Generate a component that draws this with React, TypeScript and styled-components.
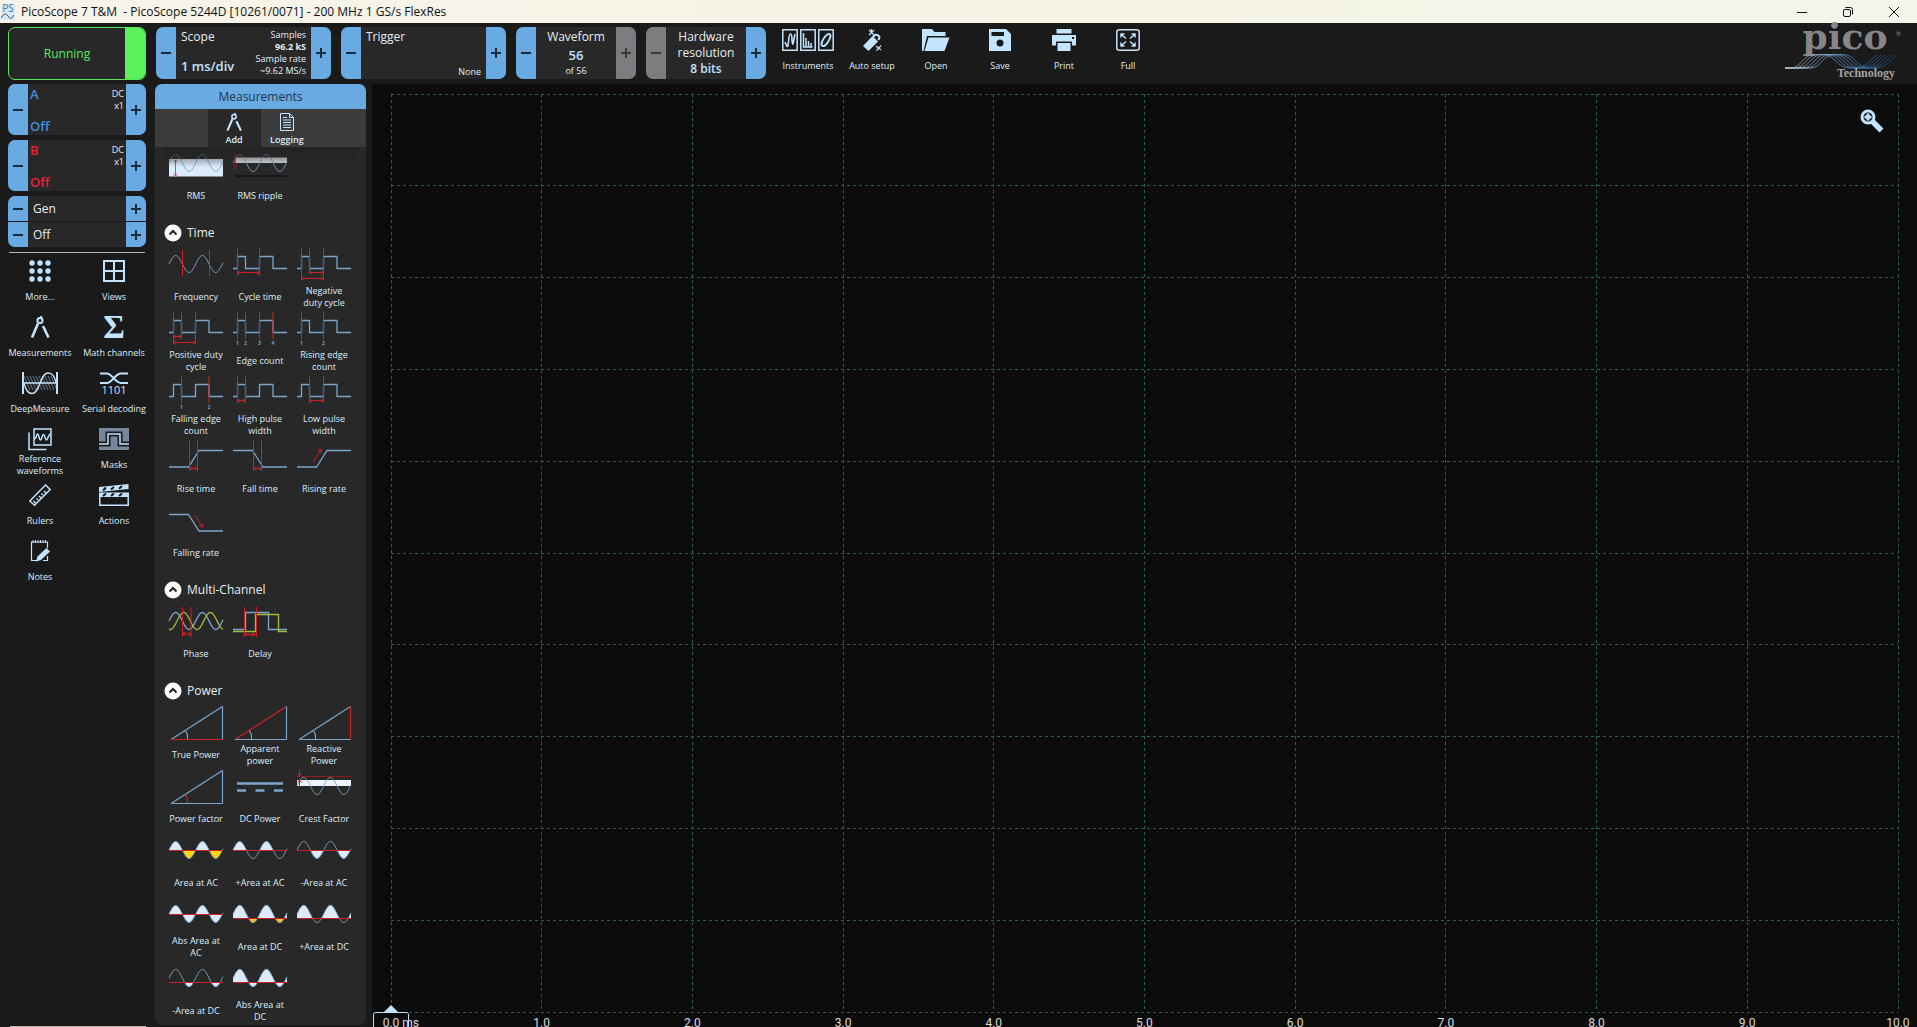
import React from "react";
import styled, { createGlobalStyle, css } from "styled-components";

const c = {
  ink: "#c3e4ff",
  label: "#dceefc",
  text: "#e6eef5",
  blue: "#69aae2",
  grey: "#7c7d80",
  panel: "#282828",
  shell: "#1a1a1a",
  line: "#79a6cc",
  red: "#cf2026",
  fill: "#dcebfb",
  yellow: "#fbd40f",
  amber: "#fbbe1c",
  green: "#9bbf3c",
};

const GlobalStyle = createGlobalStyle`
  * { box-sizing: border-box; }
  html, body, #root { height: 100%; }
  body {
    margin: 0;
    overflow: hidden;
    background: ${c.shell};
    color: ${c.text};
    font-family: "Open Sans", "Noto Sans", sans-serif;
    font-size: 12px;
    line-height: 16px;
  }
  button { font: inherit; color: inherit; background: none; border: 0; padding: 0; }
  h1, h2 { font: inherit; margin: 0; }
  svg { display: block; overflow: visible; flex: none; }
`;

const Window = styled.div`
  display: flex;
  flex-direction: column;
  height: 100vh;
`;

const TitleBar = styled.header`
  display: flex;
  align-items: center;
  height: 23px;
  flex: none;
  gap: 6px;
  background: linear-gradient(90deg, #f7f3ea, #f4f3e4 60%, #f3f4ec);
  color: #111;
`;

const Title = styled.h1`
  flex: 1;
  white-space: pre;
`;

const WindowButton = styled.button`
  display: grid;
  place-items: center;
  width: 46px;
  height: 23px;
  margin-left: -6px;
`;

const Toolbar = styled.div`
  display: flex;
  flex: none;
  gap: 10px;
  height: 61px;
  padding: 4px 12px 4px 8px;
`;

const RunButton = styled.button`
  display: flex;
  width: 138px;
  height: 53px;
  border: 1px solid #56e85a;
  border-radius: 7px;
  overflow: hidden;
  background: ${c.panel};
  color: #5bea5e;
  align-items: center;
  text-align: center;
  &::after {
    content: "";
    width: 20px;
    align-self: stretch;
    background: #5cf05c;
  }
`;

const RunText = styled.span`
  flex: 1;
`;

const Stepper = styled.section<{ $width?: number; $height?: number }>`
  display: flex;
  flex: none;
  width: ${(p) => (p.$width ? `${p.$width}px` : "auto")};
  height: ${(p) => p.$height ?? 52}px;
  border-radius: 7px;
  overflow: hidden;
  background: ${c.panel};
`;

const StepButton = styled.button<{ $off?: boolean }>`
  display: grid;
  place-items: center;
  flex: none;
  width: 20px;
  background: ${(p) => (p.$off ? c.grey : c.blue)};
  color: ${(p) => (p.$off ? "#3a3a3c" : "#1c2b38")};
`;

const Body = styled.div<{ $pad?: number }>`
  display: flex;
  flex: 1;
  justify-content: space-between;
  padding: 0 ${(p) => p.$pad ?? 5}px;
`;

const Column = styled.div<{ $align?: string; $grow?: boolean; $bottom?: number }>`
  display: flex;
  flex-direction: column;
  justify-content: space-between;
  align-items: ${(p) => p.$align ?? "flex-start"};
  flex: ${(p) => (p.$grow ? 1 : "none")};
  padding: 2px 0 ${(p) => p.$bottom ?? 2}px;
`;

const Strong = styled.strong<{ $color?: string; $size?: number }>`
  font-size: ${(p) => p.$size ?? 13}px;
  font-weight: 600;
  color: ${(p) => p.$color ?? c.ink};
`;

const Small = styled.span<{ $bold?: boolean }>`
  font-size: 9px;
  line-height: 12px;
  font-weight: ${(p) => (p.$bold ? 700 : 400)};
`;

const Tool = styled.button`
  display: flex;
  flex-direction: column;
  align-items: center;
  gap: 3px;
  height: 56px;
`;

const ToolLabel = styled.span`
  display: flex;
  align-items: center;
  justify-content: center;
  height: 24px;
  font-size: 9px;
  line-height: 12px;
  color: ${c.label};
`;

const ToolRow = styled.nav`
  display: grid;
  grid-template-columns: repeat(6, 64px);
  padding-top: 2px;
`;

const Logo = styled.svg`
  margin-left: auto;
`;

const Main = styled.main`
  display: flex;
  flex: 1;
  min-height: 0;
`;

const Sidebar = styled.aside`
  display: flex;
  flex-direction: column;
  flex: none;
  width: 155px;
`;

const Channels = styled.div`
  display: flex;
  flex-direction: column;
  gap: 5px;
  padding: 0 9px 0 8px;
`;

const Generator = styled.div`
  display: flex;
  flex-direction: column;
  gap: 1px;
  border-radius: 7px;
  overflow: hidden;
`;

const GeneratorRow = styled.div`
  display: flex;
  height: 25px;
  background: ${c.panel};
`;

const GeneratorText = styled.span`
  flex: 1;
  padding: 5px;
`;

const Rule = styled.hr`
  width: 136px;
  height: 1px;
  margin: 0;
  border: 0;
  align-self: center;
  background: #bcb8ae;
`;

const SideTools = styled.nav`
  display: grid;
  grid-template-columns: 74px 74px;
  padding: 7px 3px 0;
`;

const SideFooter = styled(Rule)`
  margin-top: auto;
`;

const Panel = styled.section`
  display: flex;
  flex-direction: column;
  flex: none;
  width: 211px;
  margin-bottom: 2px;
  border-radius: 7px;
  overflow: hidden;
  background: ${c.panel};
`;

const PanelTitle = styled.h2`
  flex: none;
  height: 25px;
  line-height: 25px;
  text-align: center;
  background: ${c.blue};
  color: #1d3550;
`;

const Tabs = styled.div`
  display: grid;
  grid-template-columns: repeat(4, 1fr);
  flex: none;
  height: 38px;
  background: #3b3b3b;
`;

const Tab = styled.button<{ $active?: boolean; $column: number }>`
  grid-column: ${(p) => p.$column};
  display: flex;
  flex-direction: column;
  align-items: center;
  justify-content: space-between;
  padding: 4px 0 1px;
  font-size: 9px;
  line-height: 12px;
  font-weight: 600;
  color: ${c.label};
  ${(p) => p.$active && css`background: ${c.panel};`}
`;

const Scroller = styled.div`
  position: relative;
  flex: 1;
  min-height: 0;
  overflow: hidden;
  padding: 0 9px;
  &::before {
    content: "";
    position: absolute;
    z-index: 1;
    inset: 0 8px auto;
    height: 20px;
    background: linear-gradient(rgba(34, 34, 34, 0.85), rgba(34, 34, 34, 0));
  }
`;

const Group = styled.div`
  & + & { margin-top: 16px; }
  &:first-child { margin-top: -3px; }
`;

const GroupTitle = styled.button`
  display: flex;
  align-items: center;
  gap: 5px;
  height: 21px;
  padding-bottom: 3px;
`;

const Cells = styled.div`
  display: grid;
  grid-template-columns: repeat(3, 64px);
`;

const Cell = styled.button`
  display: flex;
  flex-direction: column;
  align-items: center;
  gap: 4px;
  height: 64px;
`;

const CellLabel = styled(ToolLabel)`
  width: 56px;
`;

const Chart = styled.section`
  position: relative;
  display: flex;
  flex-direction: column;
  flex: 1;
  margin-left: 6px;
  padding: 10px 19px 0;
  background: #0c0c0c;
`;

const Plot = styled.svg`
  width: 100%;
  flex: 1;
  min-height: 0;
`;

const Axis = styled.div`
  position: relative;
  display: flex;
  flex: none;
  justify-content: space-between;
  height: 15px;
  padding-top: 3px;
  font-family: Roboto, sans-serif;
  color: #dcdcdc;
`;

const Tick = styled.span`
  display: flex;
  justify-content: center;
  width: 0;
  white-space: pre;
`;

const TickText = styled.span`
  position: relative;
`;

const Unit = styled.span`
  position: absolute;
  left: 100%;
`;

const Marker = styled.svg`
  position: absolute;
  left: -18px;
  top: -8px;
`;

const ZoomButton = styled.button`
  position: absolute;
  right: 33px;
  top: 25px;
`;

/* ---------- measurement glyphs, drawn on a 54 x 36 canvas ---------- */

const sineY = (x: number, shift = 0) => 19 - 8.5 * Math.sin(((x - shift) / 26.7) * 2 * Math.PI);
const xs = Array.from({ length: 109 }, (_, i) => i / 2);
const sinePath = (shift = 0) => "M" + xs.map((x) => `${x},${sineY(x, shift).toFixed(2)}`).join(" L");

const areaY = (x: number, dc?: boolean) =>
  dc ? 19 - 9 * Math.sin((x / 26.7) * 2 * Math.PI) : sineY(x);
const lobes = (base: number, upper: boolean, dc?: boolean) =>
  `M0,${base} L` +
  xs.map((x) => `${x},${(upper ? Math.min : Math.max)(areaY(x, dc), base).toFixed(2)}`).join(" L") +
  ` L54,${base} Z`;

const Stroke = ({ d, color = c.line, w = 1 }: { d: string; color?: string; w?: number }) => (
  <path d={d} fill="none" stroke={color} strokeWidth={w} />
);

const Wave = () => <Stroke d={sinePath()} />;
const Square = () => <Stroke d="M0 23.5H4.5V11.5H12.5V23.5H26.5V11.5H40V23.5H54" w={1.3} />;
const Bars = ({ at, from = 3, to = 30 }: { at: number[]; from?: number; to?: number }) => (
  <Stroke d={at.map((x) => `M${x} ${from}V${to}`).join("")} color={c.red} />
);
const Span = ({ a, b, y }: { a: number; b: number; y: number }) => (
  <Stroke
    d={`M${a} ${y}H${b}M${a + 2.5} ${y - 2}L${a + 0.5} ${y}L${a + 2.5} ${y + 2}M${b - 2.5} ${y - 2}L${b - 0.5} ${y}L${b - 2.5} ${y + 2}`}
    color={c.red}
  />
);
const Digits = ({ at }: { at: number[] }) => (
  <g fill={c.line} fontSize="5" fontWeight="700" textAnchor="middle">
    {at.map((x, i) => (
      <text key={x} x={x} y="36">{i + 1}</text>
    ))}
  </g>
);
const RiseLine = () => <Stroke d="M0 30H19.5L30 13.5H54" w={1.3} />;
const FallLine = () => <Stroke d="M0 13.5H19.5L30 30H54" w={1.3} />;

const Triangle = ({ base = c.line, side = c.line, slope = c.line, arc = c.line }) => (
  <>
    <Stroke d="M2 36.5L53.5 3.5" color={slope} w={1.2} />
    <Stroke d="M53.5 3.5V36.5" color={side} w={1.2} />
    <Stroke d="M2 36.5H53.5" color={base} w={1.2} />
    <Stroke d="M16.5 27.5Q19 31.5 18.5 36" color={arc} w={1.2} />
  </>
);

const Area = ({ dc, up, down }: { dc?: boolean; up?: boolean; down?: string }) => {
  const base = dc ? 23.5 : 19.5;
  return (
    <>
      {up && <path d={lobes(base, true, dc)} fill={c.fill} />}
      {down && <path d={lobes(base, false, dc)} fill={down} />}
      <Wave />
      <Stroke d={`M0 ${base}H54`} color={c.red} w={1.2} />
    </>
  );
};

type Item = [string, React.ReactNode];

const groups: { title?: string; items: Item[] }[] = [
  {
    items: [
      ["RMS", <>
        <rect y="15" width="54" height="17.5" fill={c.fill} />
        <Wave />
        <Stroke d="M6.5 16V32M4.5 18L6.5 16L8.5 18M4.5 30L6.5 32L8.5 30" color="#e0484c" />
      </>],
      ["RMS ripple", <>
        <rect x="2" y="13.5" width="52" height="5.5" fill="#dfe2e6" />
        <Wave />
        <Stroke d="M2 32H54" color="#101010" w={1.5} />
        <Stroke d="M2 9V26M0 11L2 13.5L4 11M0 22L2 19.5L4 22" color="#a3161b" />
      </>],
    ],
  },
  {
    title: "Time",
    items: [
      ["Frequency", <><Wave /><Bars at={[13.5, 40.5]} from={5} to={31} /></>],
      ["Cycle time", <><Square /><Bars at={[4.5, 26.5]} to={31} /><Span a={4.5} b={26.5} y={27.5} /></>],
      ["Negative duty cycle", <><Square /><Bars at={[4.5, 26.5]} to={35} /><Bars at={[12.5]} to={29} /><Span a={12.5} b={26.5} y={27.5} /><Span a={4.5} b={26.5} y={33.5} /></>],
      ["Positive duty cycle", <><Square /><Bars at={[4.5, 26.5]} to={35} /><Bars at={[12.5]} to={29} /><Span a={4.5} b={12.5} y={27.5} /><Span a={4.5} b={26.5} y={33.5} /></>],
      ["Edge count", <><Square /><Bars at={[4.5, 12.5, 26.5, 40]} /><Digits at={[4.5, 12.5, 26.5, 40]} /></>],
      ["Rising edge count", <><Square /><Bars at={[4.5, 26.5]} /><Digits at={[4.5, 26.5]} /></>],
      ["Falling edge count", <><Square /><Bars at={[12.5, 40]} /><Digits at={[12.5, 40]} /></>],
      ["High pulse width", <><Square /><Bars at={[4.5, 12.5]} /><Span a={4.5} b={12.5} y={27.5} /></>],
      ["Low pulse width", <><Square /><Bars at={[12.5, 26.5]} /><Span a={12.5} b={26.5} y={27.5} /></>],
      ["Rise time", <><RiseLine /><Bars at={[20.5, 28.5]} from={4} to={34} /><Span a={20.5} b={28.5} y={31.5} /></>],
      ["Fall time", <><FallLine /><Bars at={[20.5, 28.5]} from={4} to={34} /><Span a={20.5} b={28.5} y={31.5} /></>],
      ["Rising rate", <><RiseLine /><Stroke d="M16 25L24 12.5M20.5 13.5L24 12.5L24.5 16" color={c.red} /></>],
      ["Falling rate", <><FallLine /><Stroke d="M26 14L33.5 26M30 24.5L33.5 26L34 22.5" color={c.red} /></>],
    ],
  },
  {
    title: "Multi-Channel",
    items: [
      ["Phase", <>
        <Stroke d={sinePath()} w={1.3} />
        <Stroke d={sinePath(8)} color={c.green} w={1.3} />
        <Bars at={[13.5, 22]} from={5} to={35} />
        <Span a={13.5} b={22} y={32} />
      </>],
      ["Delay", <>
        <Stroke d="M0 27.5H12.5V10.5H35.5V27.5H54" w={1.3} />
        <Stroke d="M0 29.5H22.5V12.5H45.5V29.5H54" color={c.green} w={1.3} />
        <Bars at={[11.5, 23.5]} from={5} to={35} />
        <Stroke d="M12 32.5H22M19.5 30.5L22 32.5L19.5 34.5" color={c.red} w={1.3} />
      </>],
    ],
  },
  {
    title: "Power",
    items: [
      ["True Power", <Triangle base={c.red} />],
      ["Apparent power", <Triangle slope={c.red} />],
      ["Reactive Power", <Triangle side={c.red} />],
      ["Power factor", <Triangle arc={c.red} />],
      ["DC Power", <Stroke d="M4 16.5H50M4 23.5H13M22.5 23.5H31.5M41 23.5H50" w={2.4} />],
      ["Crest Factor", <>
        <rect y="13" width="54" height="6" fill="#edf4fb" />
        <Wave />
        <Stroke d="M0 9.5H54" color="#8f1a1e" />
        <Stroke d="M2.5 3V9M.5 6.5L2.5 9L4.5 6.5M2.5 20V13M.5 15.5L2.5 13L4.5 15.5" color={c.red} />
      </>],
      ["Area at AC", <Area up down={c.yellow} />],
      ["+Area at AC", <Area up />],
      ["-Area at AC", <Area down={c.fill} />],
      ["Abs Area at AC", <Area up down={c.fill} />],
      ["Area at DC", <Area dc up down={c.amber} />],
      ["+Area at DC", <Area dc up />],
      ["-Area at DC", <Area dc down={c.fill} />],
      ["Abs Area at DC", <Area dc up down={c.fill} />],
    ],
  },
];

/* ---------- tool icons, all 22 high ---------- */

const Icon = ({ w = 22, h = 22, view, children }: { w?: number; h?: number; view?: string; children: React.ReactNode }) => (
  <svg width={w} height={h} viewBox={view ?? `0 0 ${w} ${h}`} fill="none" stroke={c.ink} aria-hidden="true">
    {children}
  </svg>
);

const Compass = ({ h = 22 }: { h?: number }) => (
  <Icon w={h} h={h} view="0 0 22 22">
    <circle cx="11" cy="4.5" r="2.6" strokeWidth="2" />
    <path d="M12.5 0L12 2" strokeWidth="2" />
    <path d="M9 7.5L3 21.5M14 10L19.5 21.5" strokeWidth="2.6" />
  </Icon>
);

const sideTools: Item[] = [
  ["More...", <Icon>{[3, 11, 19].map((y) => [3, 11, 19].map((x) => <circle key={`${x}-${y}`} cx={x} cy={y} r="2.7" fill={c.ink} stroke="none" />))}</Icon>],
  ["Views", <Icon><path d="M1 1H21V21H1ZM11 1V21M1 11H21" strokeWidth="2" /></Icon>],
  ["Measurements", <Compass />],
  ["Math channels", <Icon><text x="11" y="22" fontFamily="Liberation Serif, serif" fontWeight="700" fontSize="33" textAnchor="middle" fill={c.ink} stroke="none">Σ</text></Icon>],
  ["DeepMeasure", <Icon w={36}>
    <path d={Array.from({ length: 10 }, (_, i) => `M${2 + i * 3} 4L${8 + i * 3} 18`).join("")} stroke="#7c8b98" strokeWidth=".8" />
    <path d="M1 0V22M35 0V22" strokeWidth="2" />
    <path d="M1 11H35" strokeWidth="1.5" />
    <path d="M2 11C4 20 7 21.5 10 21.5C18 21.5 18 1 26 1C30 1 33 5 34 11" strokeWidth="1.3" />
  </Icon>],
  ["Serial decoding", <Icon w={30}>
    <path d="M1 1.5H8C13 1.5 16 11 22 11H29M1 11H8C13 11 16 1.5 22 1.5H29" strokeWidth="2" />
    <text x="15" y="22" fontSize="11" textAnchor="middle" fill={c.ink} stroke="none">1101</text>
  </Icon>],
  ["Reference waveforms", <Icon w={24}>
    <path d="M6 1H23V17H6ZM1 4.5V21.5H18.5" strokeWidth="1.5" />
    <path d="M6 11C9 11 8 6 9.5 6S11 12 12.5 12S14 6.5 15.5 6.5S17 12 18.5 12S20 6 23 6" strokeWidth="1.5" />
  </Icon>],
  ["Masks", <Icon w={30}>
    <rect width="30" height="22" fill="#75879a" stroke="none" />
    <path d="M0 16H9V6H21V16H30" stroke="#1a1a1a" strokeWidth="5" />
    <path d="M0 16H9V6H21V16H30" strokeWidth="1.5" />
  </Icon>],
  ["Rulers", <Icon><path d="M.8 17L16.5 1L21.2 5.5L5.5 21.3ZM4.5 17L6.5 19M7.5 14.5L9 16M10 12L12 14M12.5 9.5L14 11M15 7L17 9" strokeWidth="1.5" /></Icon>],
  ["Actions", <Icon w={30}>
    <path d="M.8 9V21.3H29.2V9" strokeWidth="1.5" />
    <path d="M0 3L29.5 0V5L0 8ZM0 8.5H30V13H0Z" fill={c.ink} stroke="none" />
    <path d="M4 6.5L7 3.5M12 5.5L15 3M20 4.7L23 2M4 12L7 9.5M12 12L15 9.5M20 12L23 9.5" stroke="#1a1a1a" strokeWidth="2" />
  </Icon>],
  ["Notes", <Icon>
    <path d="M18.5 8V2H2.5V20.5H8M18.5 16V20.5H14" strokeWidth="1.2" />
    <path d="M4 0V3M6.5 0V3M9 0V3M11.5 0V3M14 0V3M16.5 0V3" />
    <path d="M7 21.5L8.5 16.5L17.5 8L21 11.5L12 20Z" fill={c.ink} stroke="none" />
  </Icon>],
];

const topTools: Item[] = [
  ["Instruments", <Icon w={52}>
    <path d="M.8 .8H15.2V21.2H.8ZM18.8 .8H33.2V21.2H18.8ZM36.8 .8H51.2V21.2H36.8Z" strokeWidth="1.5" />
    <path d="M3 13L5 17.5Q6 18 6.5 13Q7 5 8.5 5T10 11Q10.500 15.500 11 15L13 5" strokeWidth="1.6" />
    <path d="M21.5 4V18H30.5M24 18V9M26.5 18V12M29 18V14" strokeWidth="1.5" />
    <ellipse cx="44" cy="11" rx="2.7" ry="7" transform="rotate(32 44 11)" strokeWidth="1.8" />
  </Icon>],
  ["Auto setup", <Icon>
    <path d="M2 17L11.5 7L17 12.5L7.5 22Z" fill={c.ink} stroke="none" />
    <path d="M12 8L14 6Q17 5 18.5 8L17.5 11" strokeWidth="2" />
    <path d="M8 1L13 6M13 1L8 6M10.5 0V3M15 17L20 21M20 16.5L15.5 21.5" strokeWidth="1.2" />
  </Icon>],
  ["Open", <Icon w={28}>
    <path d="M0 0H10L12.5 3H23.5V7H5L1.5 22H0Z" fill={c.ink} stroke="none" />
    <path d="M6.5 8.5H27.5L22.5 22H2.5Z" fill={c.ink} stroke="none" />
  </Icon>],
  ["Save", <Icon>
    <path d="M0 0H17L22 5V22H0Z" fill={c.ink} stroke="none" />
    <rect x="2.5" y="3" width="12.5" height="4" fill="#1a1a1a" stroke="none" />
    <circle cx="11" cy="14" r="3.5" fill="#1a1a1a" stroke="none" />
  </Icon>],
  ["Print", <Icon w={24}>
    <path d="M4.5 0H19.5V4.5H4.5ZM0 6H24V16.5H20V12.5H4V16.5H0Z" fill={c.ink} stroke="none" />
    <rect x="20" y="8" width="2" height="2" fill="#1a1a1a" stroke="none" />
    <rect x="5.5" y="14" width="13" height="8" fill={c.ink} stroke="none" />
  </Icon>],
  ["Full", <Icon w={24}>
    <rect x=".8" y=".8" width="22.4" height="20.4" rx="2.5" strokeWidth="1.5" />
    <path d="M5 8.5V5H8.5M5 5L10 9.5M19 8.5V5H15.5M19 5L14 9.5M5 13.5V17H8.5M5 17L10 12.5M19 13.5V17H15.5M19 17L14 12.5" strokeWidth="1.5" />
  </Icon>],
];

const Step = ({ kind, off, name }: { kind: "minus" | "plus"; off?: boolean; name: string }) => (
  <StepButton $off={off} disabled={off} aria-label={`${name} ${kind === "plus" ? "up" : "down"}`}>
    <svg width="10" height="10" stroke="currentColor" strokeWidth="2">
      <path d={kind === "plus" ? "M0 5H10M5 0V10" : "M0 5H10"} />
    </svg>
  </StepButton>
);

const Channel = ({ name, color }: { name: string; color: string }) => (
  <Stepper $height={51}>
    <Step kind="minus" name={name} />
    <Body $pad={2}>
      <Column $bottom={1}>
        <Strong $color={color}>{name}</Strong>
        <Strong $color={color}>Off</Strong>
      </Column>
      <Column $align="flex-end">
        <Column $align="flex-end" as="span" $bottom={0}>
          <Small>DC</Small>
          <Small>x1</Small>
        </Column>
      </Column>
    </Body>
    <Step kind="plus" name={name} />
  </Stepper>
);

const PicoLogo = () => (
  <Logo width="120" height="54" role="img" aria-label="Pico Technology">
    <defs>
      <linearGradient id="wave" gradientUnits="userSpaceOnUse" x1="0" y1="0" x2="120" y2="0">
        <stop offset="0" stopColor="#b5b8bb" />
        <stop offset=".35" stopColor="#6f9cc0" />
        <stop offset=".7" stopColor="#2f6496" />
        <stop offset="1" stopColor="#15334d" />
      </linearGradient>
    </defs>
    <text x="60" y="22" fontFamily="DejaVu Serif, serif" fontWeight="700" fontSize="36" textAnchor="middle" fill="#868688">pico</text>
    <text x="111" y="9" fontSize="6" fill="#8b8b8d">®</text>
    {[0, 1, 2, 3, 4, 5].map((k) => (
      <path
        key={k}
        fill="none"
        stroke="url(#wave)"
        strokeWidth=".8"
        d={`M0 41H${6 + k * 4}C${16 + k * 4} 41 ${18 + k * 4} 27.5 ${29 + k * 4} 27.5H${38 + k * 4}C${50 + k * 4} 27.5 ${52 + k * 4} 41 ${64 + k * 4} 41H${70 + k * 4}C${80 + k * 4} 41 ${84 + k * 4} 34 ${92 + k * 4} 28`}
      />
    ))}
    <text x="81" y="50" fontFamily="Liberation Serif, serif" fontWeight="700" fontSize="12" textAnchor="middle" fill="#a3a3a5">Technology</text>
  </Logo>
);

const steps = Array.from({ length: 11 }, (_, i) => i);

export default function App() {
  return (
    <Window>
      <GlobalStyle />
      <TitleBar>
        <svg width="15" height="18" aria-hidden="true">
          <rect x="1" y="1" width="14" height="16" fill="#dbe9f5" />
          <text x="8" y="9" fontSize="10" textAnchor="middle" fill="#2f78b3">PS</text>
          <path d="M1 15Q5 8 8 13T14 12" fill="none" stroke="#33536e" />
        </svg>
        <Title>PicoScope 7 T&amp;M  - PicoScope 5244D [10261/0071] - 200 MHz 1 GS/s FlexRes</Title>
        <WindowButton aria-label="Minimize"><svg width="10" height="10" stroke="#111"><path d="M0 5.5H10" /></svg></WindowButton>
        <WindowButton aria-label="Restore">
          <svg width="10" height="10" stroke="#111" fill="none"><rect x=".5" y="2.5" width="7" height="7" rx="1.5" /><path d="M2.5 .5H7.5Q9.5 .5 9.5 2.5V7.5" /></svg>
        </WindowButton>
        <WindowButton aria-label="Close"><svg width="10" height="10" stroke="#111"><path d="M0 0L10 10M10 0L0 10" /></svg></WindowButton>
      </TitleBar>

      <Toolbar>
        <RunButton><RunText>Running</RunText></RunButton>
        <Stepper $width={175}>
          <Step kind="minus" name="Timebase" />
          <Body>
            <Column $bottom={5}><span>Scope</span><Strong>1 ms/div</Strong></Column>
            <Column $align="flex-end">
              <Small>Samples</Small><Small $bold>96.2 kS</Small><Small>Sample rate</Small><Small>~9.62 MS/s</Small>
            </Column>
          </Body>
          <Step kind="plus" name="Timebase" />
        </Stepper>
        <Stepper $width={165}>
          <Step kind="minus" name="Trigger" />
          <Body>
            <Column><span>Trigger</span></Column>
            <Column $align="flex-end" $bottom={1}><span /><Small>None</Small></Column>
          </Body>
          <Step kind="plus" name="Trigger" />
        </Stepper>
        <Stepper $width={120}>
          <Step kind="minus" name="Waveform" />
          <Column $grow $align="center"><span>Waveform</span><Strong>56</Strong><Small>of 56</Small></Column>
          <Step kind="plus" off name="Waveform" />
        </Stepper>
        <Stepper $width={120}>
          <Step kind="minus" off name="Resolution" />
          <Column $grow $align="center"><span>Hardware</span><span>resolution</span><Strong $size={12}>8 bits</Strong></Column>
          <Step kind="plus" name="Resolution" />
        </Stepper>
        <ToolRow aria-label="Main tools">
          {topTools.map(([label, icon]) => (
            <Tool key={label}>{icon}<ToolLabel>{label}</ToolLabel></Tool>
          ))}
        </ToolRow>
        <PicoLogo />
      </Toolbar>

      <Main>
        <Sidebar>
          <Channels>
            <Channel name="A" color="#3f8fdc" />
            <Channel name="B" color="#e5213f" />
            <Generator>
              {["Gen", "Off"].map((t) => (
                <GeneratorRow key={t}>
                  <Step kind="minus" name={t} /><GeneratorText>{t}</GeneratorText><Step kind="plus" name={t} />
                </GeneratorRow>
              ))}
            </Generator>
            <Rule />
          </Channels>
          <SideTools aria-label="Views and tools">
            {sideTools.map(([label, icon]) => (
              <Tool key={label}>{icon}<ToolLabel>{label}</ToolLabel></Tool>
            ))}
          </SideTools>
          <SideFooter />
        </Sidebar>

        <Panel>
          <PanelTitle>Measurements</PanelTitle>
          <Tabs>
            <Tab $active $column={2}><Compass h={18} />Add</Tab>
            <Tab $column={3}>
              <Icon w={14} h={18}><path d="M.5 .5H9.5L13.5 4.5V17.5H.5ZM9.5 .5V4.5H13.5M3 4.5H7M3 7H11M3 9.5H11M3 12H11M3 14.5H11" /></Icon>
              Logging
            </Tab>
          </Tabs>
          <Scroller>
            {groups.map((g, i) => (
              <Group key={i}>
                {g.title && (
                  <GroupTitle>
                    <svg width="18" height="18" aria-hidden="true">
                      <circle cx="9" cy="9" r="8.5" fill="#fff" />
                      <path d="M5.5 10.5L9 7L12.5 10.5" fill="none" stroke="#222" strokeWidth="2" />
                    </svg>
                    {g.title}
                  </GroupTitle>
                )}
                <Cells>
                  {g.items.map(([label, art]) => (
                    <Cell key={label}>
                      <svg width="54" height="36" aria-hidden="true">{art}</svg>
                      <CellLabel>{label}</CellLabel>
                    </Cell>
                  ))}
                </Cells>
              </Group>
            ))}
          </Scroller>
        </Panel>

        <Chart>
          <Plot stroke="#27605b" strokeDasharray="3 3" shapeRendering="crispEdges" role="img" aria-label="Scope grid">
            {steps.map((i) => (
              <g key={i}>
                <line x1={`${i * 10}%`} x2={`${i * 10}%`} y1="0" y2="100%" />
                <line y1={`${i * 10}%`} y2={`${i * 10}%`} x1="0" x2="100%" />
              </g>
            ))}
          </Plot>
          <Axis>
            <Marker width="36" height="24" aria-hidden="true">
              <path d="M11 8L18 1L25 8Z" fill={c.ink} />
              <rect x=".5" y="8.5" width="35" height="20" rx="2" fill="#0c0c0c" stroke={c.ink} />
            </Marker>
            {steps.map((i) => (
              <Tick key={i}><TickText>{i.toFixed(1)}{i === 0 && <Unit> ms</Unit>}</TickText></Tick>
            ))}
          </Axis>
          <ZoomButton aria-label="Zoom">
            <svg width="24" height="24" aria-hidden="true">
              <circle cx="8" cy="8" r="6" fill="none" stroke={c.ink} strokeWidth="3" />
              <path d="M8 4.5V11.5M4.5 8H11.5" stroke={c.ink} strokeWidth="3" />
              <path d="M12.5 12.5L21.5 21.5" stroke={c.ink} strokeWidth="5.5" />
            </svg>
          </ZoomButton>
        </Chart>
      </Main>
    </Window>
  );
}
